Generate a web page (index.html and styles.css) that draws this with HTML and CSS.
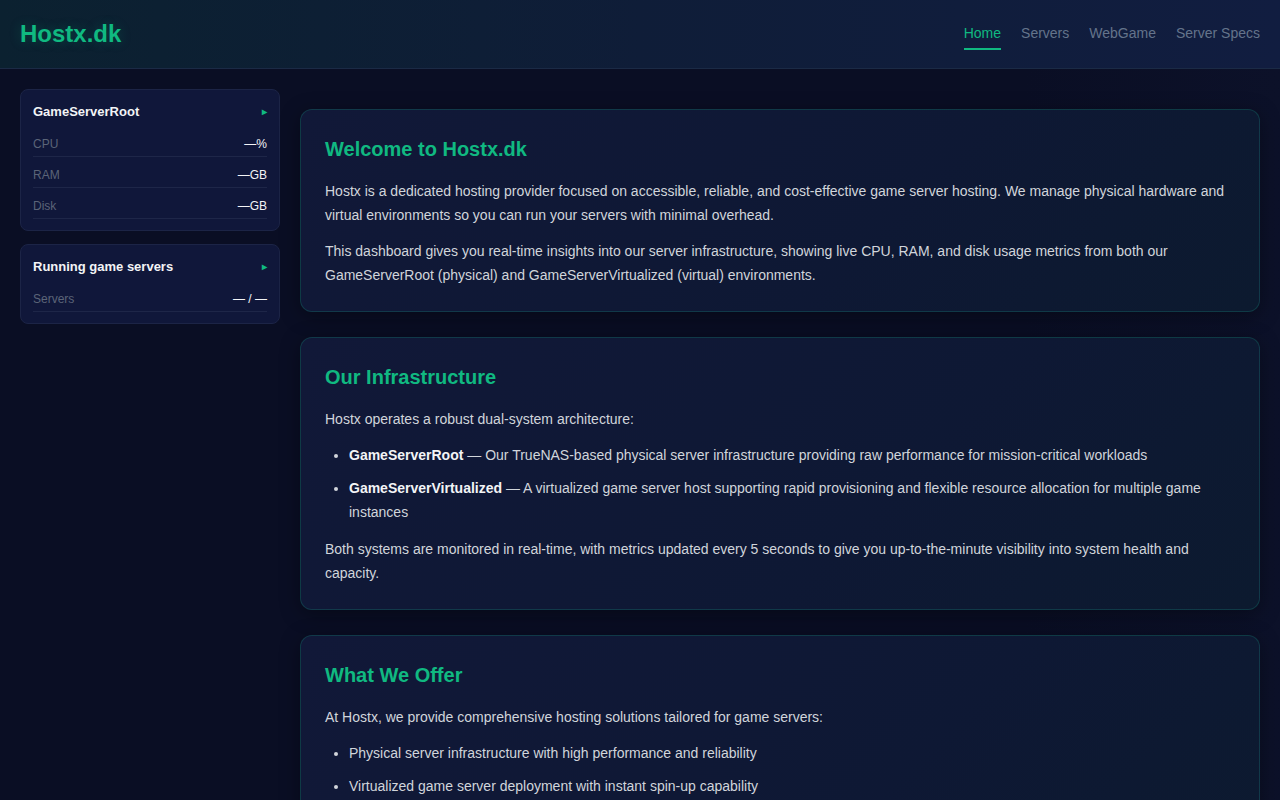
FILE: index.html
```html
<!DOCTYPE html>
<html lang="en">
  <head>
    <meta name="viewport" content="width=device-width, initial-scale=1.0" />
    <title>Hostx.dk</title>
    <link rel="stylesheet" href="styles.css">
  </head>
  <body>
    <header class="topbar">
      <div class="logo">Hostx.dk</div>
      <nav class="nav">
        <a href="#" class="active">Home</a>
        <a href="#">Servers</a>
        <a href="#">WebGame</a>
        <a href="#">Server Specs</a>
      </nav>
    </header>

    <div class="layout">
      <aside class="sidebar">
        <div class="panel">
          <div class="panel-title">
            <span>GameServerRoot</span>
            <span class="arrow">&#9656;</span>
          </div>
          <div class="row"><span class="label">CPU</span><span class="value">—%</span></div>
          <div class="row"><span class="label">RAM</span><span class="value">—GB</span></div>
          <div class="row"><span class="label">Disk</span><span class="value">—GB</span></div>
        </div>
        <div class="panel">
          <div class="panel-title">
            <span>Running game servers</span>
            <span class="arrow">&#9656;</span>
          </div>
          <div class="row"><span class="label">Servers</span><span class="value">— / —</span></div>
        </div>
      </aside>

      <main class="content">
        <section class="card">
          <h2>Welcome to Hostx.dk</h2>
          <p>Hostx is a dedicated hosting provider focused on accessible, reliable, and cost-effective game server hosting. We manage physical hardware and virtual environments so you can run your servers with minimal overhead.</p>
          <p>This dashboard gives you real-time insights into our server infrastructure, showing live CPU, RAM, and disk usage metrics from both our GameServerRoot (physical) and GameServerVirtualized (virtual) environments.</p>
        </section>

        <section class="card">
          <h2>Our Infrastructure</h2>
          <p>Hostx operates a robust dual-system architecture:</p>
          <ul>
            <li><strong>GameServerRoot</strong> — Our TrueNAS-based physical server infrastructure providing raw performance for mission-critical workloads</li>
            <li><strong>GameServerVirtualized</strong> — A virtualized game server host supporting rapid provisioning and flexible resource allocation for multiple game instances</li>
          </ul>
          <p>Both systems are monitored in real-time, with metrics updated every 5 seconds to give you up-to-the-minute visibility into system health and capacity.</p>
        </section>

        <section class="card">
          <h2>What We Offer</h2>
          <p>At Hostx, we provide comprehensive hosting solutions tailored for game servers:</p>
          <ul>
            <li>Physical server infrastructure with high performance and reliability</li>
            <li>Virtualized game server deployment with instant spin-up capability</li>
            <li>Real-time monitoring of CPU, RAM and disk usage</li>
            <li>Affordable pricing with no hidden fees</li>
          </ul>
        </section>
      </main>
    </div>
  </body>
</html>
```

FILE: styles.css
```css
* {
  padding: 0;
  margin: 0;
  box-sizing: border-box;
}
body {
  font-family: "Liberation Sans", Arial, sans-serif;
  background: linear-gradient(to right, #0a0e24, #0a0e24 80%, #0c1129);
  color: #d1d5db;
  min-height: 100vh;
}
.topbar {
  height: 69px;
  display: flex;
  align-items: center;
  justify-content: space-between;
  padding: 0 20px;
  background: linear-gradient(to right, #0b2130, #0f1d38 50%, #111d40);
  border-bottom: 1px solid #1b2a45;
}
.logo {
  font-size: 24px;
  font-weight: bold;
  color: #10b981;
  text-shadow: 0 0 12px rgba(16, 185, 129, 0.25);
}
.nav {
  display: flex;
  gap: 20px;
}
.nav a {
  color: #64748b;
  text-decoration: none;
  font-size: 14px;
  line-height: 16px;
  padding: 6px 0 7px;
  border-bottom: 2px solid transparent;
}
.nav a.active {
  color: #10b981;
  border-bottom-color: #10b981;
}
.layout {
  display: flex;
  gap: 20px;
  padding: 20px;
  align-items: flex-start;
}
.sidebar {
  width: 260px;
  flex-shrink: 0;
  display: flex;
  flex-direction: column;
  gap: 13px;
}
.panel {
  background: #10173a;
  border: 1px solid #1c2446;
  border-radius: 8px;
  padding: 13px 12px 11px;
}
.panel-title {
  display: flex;
  justify-content: space-between;
  align-items: center;
  font-size: 13px;
  font-weight: bold;
  color: #f3f4f6;
  line-height: 18px;
  margin-bottom: 5px;
}
.arrow {
  color: #10b981;
  font-size: 10px;
}
.row {
  display: flex;
  justify-content: space-between;
  font-size: 12px;
  line-height: 18px;
  padding: 9px 0 3px;
  border-bottom: 1px solid #1e2648;
}
.label {
  color: #5b6478;
}
.value {
  color: #f3f4f6;
}
.content {
  flex: 1;
  display: flex;
  flex-direction: column;
  gap: 25px;
  padding-top: 20px;
}
.card {
  background: linear-gradient(135deg, #111838, #0e1834 60%, #0c1a2f);
  border: 1px solid rgba(20, 120, 110, 0.35);
  border-radius: 12px;
  padding: 24px;
  box-shadow: 0 4px 20px rgba(0, 0, 0, 0.35);
}
.card h2 {
  color: #10b981;
  font-size: 20px;
  line-height: 30px;
  margin-bottom: 15px;
}
.card p {
  font-size: 14px;
  line-height: 24px;
  color: #d1d5db;
  margin-bottom: 12px;
}
.card p:last-child {
  margin-bottom: 0;
}
.card ul {
  padding-left: 24px;
  margin-bottom: 13px;
}
.card li {
  font-size: 14px;
  line-height: 24px;
  margin-bottom: 9px;
}
.card strong {
  color: #f3f4f6;
}
```
